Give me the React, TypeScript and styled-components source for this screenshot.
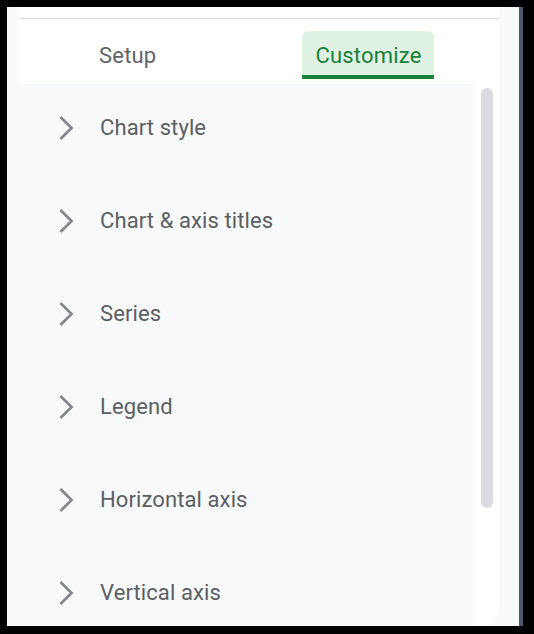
import React from 'react'
import styled, { createGlobalStyle } from 'styled-components'

const GlobalStyle = createGlobalStyle`
    html, body {
        margin: 0;
        padding: 0;
        background: #000;
    }
    body {
        font-family: Roboto, "Noto Sans", Arial, sans-serif;
    }
`;

const sections = [
    'Chart style',
    'Chart & axis titles',
    'Series',
    'Legend',
    'Horizontal axis',
    'Vertical axis',
];

const Chevron = () => (
    <svg width="16" height="26" viewBox="0 0 16 26" aria-hidden="true">
        <polyline points="2.4,2 13.6,13 2.4,24" fill="none" stroke="#80868b" strokeWidth="2.6" />
    </svg>
)

const App = () => {
    return (
        <>
            <GlobalStyle />
            <Frame>
                <Card>
                    <Divider />
                    <TabBar>
                        <Tab>Setup</Tab>
                        <Tab $active>Customize</Tab>
                    </TabBar>
                    <Body>
                        <List>
                            {sections.map((s) => (
                                <Row key={s}>
                                    <Chevron />
                                    <Label>{s}</Label>
                                </Row>
                            ))}
                        </List>
                        <Gutter>
                            <Thumb />
                        </Gutter>
                    </Body>
                </Card>
            </Frame>
        </>
    )
}

const Frame = styled.div`
    margin: 7px 0 0 7px;
    width: 516px;
    height: 619px;
    background: #f8f9fa;
    border-right: 4px solid #4a5a6e;
    padding-left: 12px;
    box-sizing: border-box;
    display: flex;
    overflow: hidden;
`;

const Card = styled.div`
    width: 480px;
    height: 100%;
    background: #fff;
    border-radius: 0 0 16px 16px;
    padding-top: 11px;
    box-sizing: border-box;
    display: flex;
    flex-direction: column;
    overflow: hidden;
`;

const Divider = styled.div`
    height: 1px;
    background: #dadce0;
    flex-shrink: 0;
`;

const TabBar = styled.div`
    display: flex;
    gap: 134px;
    padding-left: 67px;
    margin-top: 12px;
    flex-shrink: 0;
`;

const Tab = styled.div<{ $active?: boolean }>`
    height: 48px;
    padding: 4px 12px 0 13px;
    box-sizing: border-box;
    display: flex;
    align-items: center;
    font-size: 22px;
    letter-spacing: 0.2px;
    color: ${(p) => (p.$active ? '#188038' : '#5f6368')};
    background: ${(p) => (p.$active ? '#e0f2e4' : 'transparent')};
    border-radius: 6px 6px 0 0;
    border-bottom: 4px solid ${(p) => (p.$active ? '#188038' : 'transparent')};
`;

const Body = styled.div`
    flex: 1;
    display: flex;
    margin-top: 5px;
    min-height: 0;
`;

const List = styled.div`
    width: 456px;
    background: #f8f9fa;
    overflow: hidden;
`;

const Row = styled.div`
    height: 93px;
    padding: 0 0 6px 39px;
    box-sizing: border-box;
    display: flex;
    align-items: center;
`;

const Label = styled.span`
    margin-left: 26px;
    font-size: 22px;
    color: #5b5f64;
    letter-spacing: 0.1px;
`;

const Gutter = styled.div`
    flex: 1;
    padding: 4px 0 0 6px;
`;

const Thumb = styled.div`
    width: 12px;
    height: 420px;
    border-radius: 6px;
    background: #dadce0;
`;

export default App
